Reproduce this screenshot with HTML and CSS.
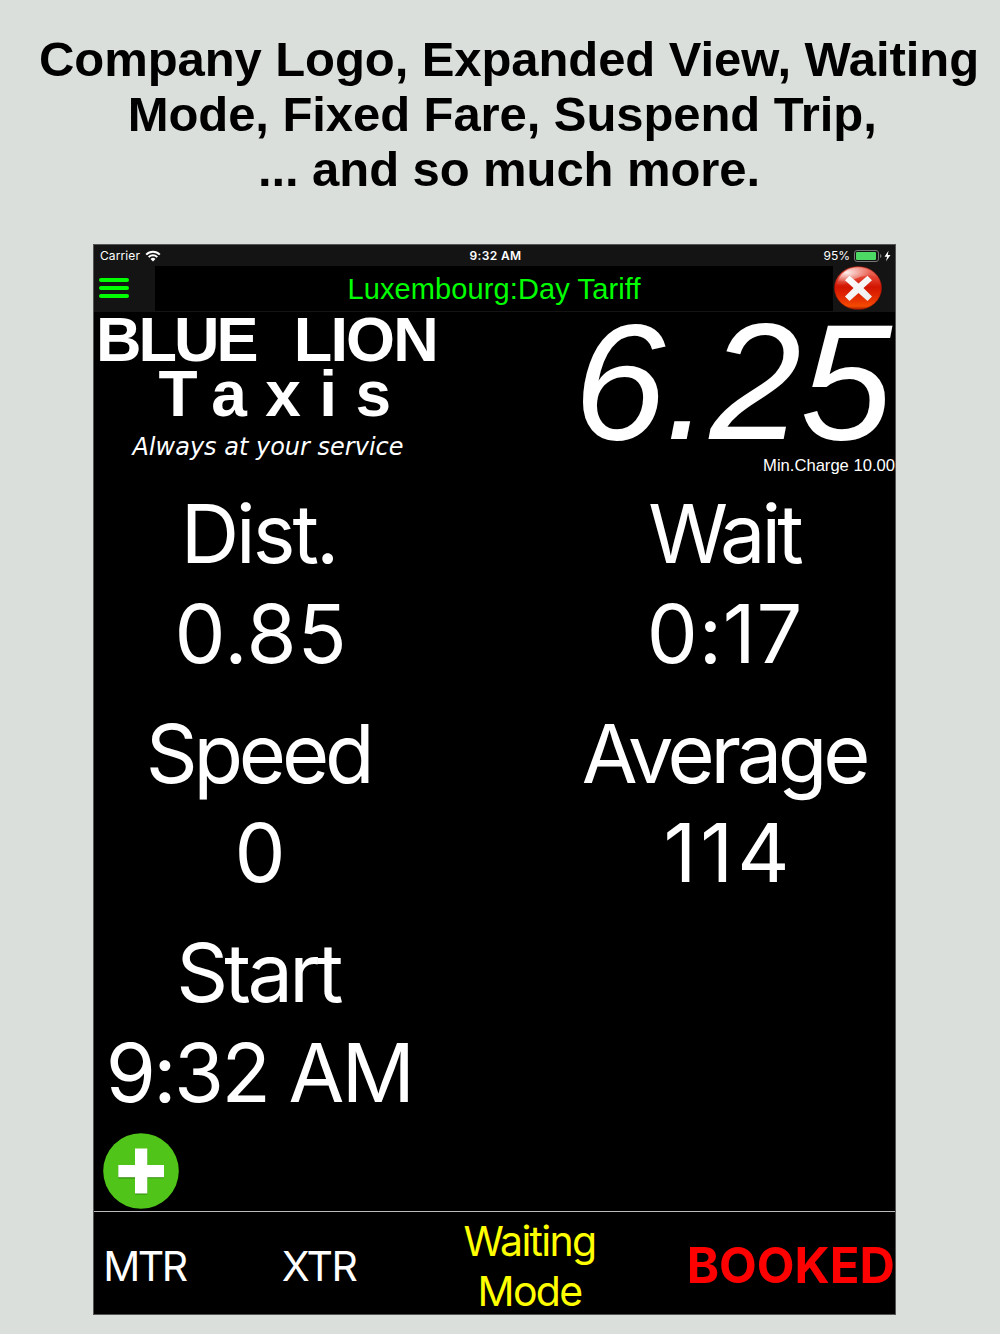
FILE: index.html
```
<!DOCTYPE html>
<html lang="en">
<head>
  <meta charset="UTF-8" />
  <meta name="viewport" content="width=device-width, initial-scale=1.0" />
  <title>Taxi Meter</title>
  <link rel="stylesheet" href="styles.css">
</head>
<body>
  <h1>Company Logo, Expanded View, Waiting<br>Mode, Fixed Fare, Suspend Trip,&nbsp;<br>... and so much more.</h1>

  <div class="app">
    <div class="status">
      <div class="carrier">
        <span>Carrier</span>
        <svg width="16" height="12" viewBox="0 0 16 12">
          <path d="M1.2 4.6a9.6 9.6 0 0 1 13.6 0M3.7 7.1a6.1 6.1 0 0 1 8.6 0" fill="none" stroke="#fff" stroke-width="2"/>
          <path d="M5.5 9a3.6 3.6 0 0 1 5 0L8 11.6z" fill="#fff"/>
        </svg>
      </div>
      <div class="clock">9:32 AM</div>
      <div class="battery">
        <span>95%</span>
        <svg width="37" height="12" viewBox="0 0 37 12">
          <rect x="0.5" y="0.5" width="24" height="11" rx="2.5" fill="none" stroke="#777"/>
          <rect x="2" y="2" width="20" height="8" rx="1" fill="#4cd964"/>
          <path d="M26 4v4q1.5-.5 1.5-2T26 4" fill="#777"/>
          <path d="M34.5.8 30.5 6.7h2.6L32 11.2l4.5-6.2h-2.7z" fill="#fff"/>
        </svg>
      </div>
    </div>

    <div class="nav">
      <div class="menu">
        <i></i><i></i><i></i>
      </div>
      <div class="tariff">Luxembourg:Day Tariff</div>
      <div class="close">
        <svg width="48" height="44" viewBox="0 0 48 44">
          <defs>
            <linearGradient id="ball" x1="0" y1="0" x2="0" y2="1">
              <stop offset="0" stop-color="#ee6a5c"/>
              <stop offset=".3" stop-color="#e03a28"/>
              <stop offset=".48" stop-color="#d21400"/>
              <stop offset=".75" stop-color="#e63000"/>
              <stop offset=".92" stop-color="#f44a00"/>
              <stop offset="1" stop-color="#a01c00"/>
            </linearGradient>
            <radialGradient id="shine" cx=".25" cy=".3" r=".6">
              <stop offset="0" stop-color="#fff" stop-opacity=".9"/>
              <stop offset="1" stop-color="#fff" stop-opacity=".08"/>
            </radialGradient>
            <linearGradient id="cross" x1="0" y1="0" x2="1" y2="1">
              <stop offset="0" stop-color="#fff"/>
              <stop offset="1" stop-color="#ececec"/>
            </linearGradient>
          </defs>
          <ellipse cx="24" cy="22" rx="23.6" ry="21.6" fill="url(#ball)" stroke="#8c1408" stroke-width=".5"/>
          <path d="M3 18C5 7 14 1.5 24 1.5c9 0 15 3.5 18.5 9C34 8 24 11 18 15 13 18 8 19 3 18z" fill="url(#shine)"/>
          <path d="M15.500 9.800 24.500 17.500 33.500 9.800 38 14.300 29.500 22 38 30.500 33.500 35 24.500 27 15.500 35 11 30.500 19.500 22 11 14.300z" fill="url(#cross)"/>
        </svg>
      </div>
    </div>

    <div class="top">
      <div class="logo">
        <div class="name"><span class="blue">BLUE</span><span class="lion">LION</span></div>
        <div class="taxis">Taxis</div>
        <div class="slogan">Always at your service</div>
      </div>
      <div class="fare">
        <div class="amount">6.25</div>
        <div class="min">Min.Charge 10.00</div>
      </div>
    </div>

    <div class="grid">
      <div class="cell">
        <div class="dist">Dist.</div>
        <div class="num">0.85</div>
      </div>
      <div class="cell">
        <div class="wait">Wait</div>
        <div class="num">0:17</div>
      </div>
      <div class="cell">
        <div class="speed">Speed</div>
        <div class="zero">0</div>
      </div>
      <div class="cell">
        <div class="avg">Average</div>
        <div class="avg-num">114</div>
      </div>
      <div class="cell">
        <div class="start">Start</div>
        <div class="start-time">9:32 AM</div>
      </div>
    </div>

    <div class="add">
      <svg width="76" height="76" viewBox="0 0 76 76">
        <circle cx="38" cy="38" r="37.8" fill="#50c418"/>
        <path d="M32 16.5h12.3v16H61v12.7H44.3v16.3H32v-16H15.3V32.5H32z" fill="#2f8a0a"/>
        <path d="M32 15.6h12.3v16.3H61v12.4H44.3v16.3H32V44.3H15.3V31.9H32z" fill="#fff"/>
      </svg>
    </div>

    <div class="footer">
      <div class="mtr">MTR</div>
      <div class="xtr">XTR</div>
      <div class="mode">Waiting<br>Mode</div>
      <div class="booked">BOOKED</div>
    </div>
  </div>
</body>
</html>
```
FILE: styles.css
```
* {
  box-sizing: border-box;
}

body {
  margin: 0;
  background: #dbdfdb;
  font-family: Inter, sans-serif;
  color: #fff;
}

svg {
  display: block;
}

h1 {
  margin: 0;
  padding: 32px 0 47px 18px;
  font: bold 49px/55px "Liberation Sans", sans-serif;
  letter-spacing: -0.08px;
  text-align: center;
  white-space: nowrap;
  color: #000;
}

.app {
  width: 803px;
  height: 1071px;
  margin-left: 93px;
  border: 1px solid #555;
  background: #000;
}

.status {
  height: 21px;
  background: #141414;
  display: grid;
  grid-template-columns: 1fr 1fr 1fr;
  align-items: center;
  font-size: 12px;
  padding: 0 4px 0 6px;
}

.carrier {
  display: flex;
  align-items: center;
  gap: 5px;
  letter-spacing: 0.1px;
}

.clock {
  font-weight: 600;
  letter-spacing: 0.35px;
  text-align: center;
}

.battery {
  display: flex;
  align-items: center;
  justify-content: flex-end;
  gap: 4px;
}

.nav {
  height: 46px;
  display: flex;
  border-bottom: 1px solid #141414;
}

.menu {
  width: 61px;
  background: #141414;
  display: flex;
  flex-direction: column;
  justify-content: center;
  gap: 4px;
  padding: 0 0 2px 5px;
}

.menu i {
  width: 30px;
  height: 4px;
  border-radius: 2px;
  background: #0f0;
}

.tariff {
  flex: 1;
  font: 29px/46px "Liberation Sans", sans-serif;
  letter-spacing: 0.12px;
  text-align: center;
  color: #0f0;
}

.close {
  width: 62px;
  background: #141414;
  padding: 0 0 0 1px;
}

.top {
  height: 171px;
  display: flex;
  justify-content: space-between;
}

.logo {
  width: 346px;
  text-align: center;
}

.name {
  display: flex;
  justify-content: space-between;
  padding: 0 3px 0 2px;
  font: bold 63px/55px "Liberation Sans", sans-serif;
}

.blue {
  letter-spacing: -3px;
}

.lion {
  letter-spacing: -1.8px;
}

.taxis {
  font: bold 64px/55px "Liberation Sans", sans-serif;
  letter-spacing: 18.4px;
  padding-left: 34px;
}

.slogan {
  font: italic 24px/50px "DejaVu Sans", sans-serif;
  padding-left: 2px;
  white-space: nowrap;
}

.fare {
  text-align: right;
  font-family: "Liberation Sans", sans-serif;
}

.amount {
  padding-right: 4px;
  font-size: 165px;
  font-style: italic;
  line-height: 140px;
  letter-spacing: -1px;
}

.min {
  font-size: 16.6px;
  line-height: 28px;
}

.grid {
  padding: 2px 3px 0 0;
  display: grid;
  grid-template-columns: 334px 334px;
  justify-content: space-between;
  row-gap: 20.5px;
  font-size: 81px;
  line-height: 99.5px;
  text-align: center;
  white-space: nowrap;
}

.num {
  letter-spacing: 0.8px;
}

.dist {
  padding-right: 5px;
  letter-spacing: -3px;
}

.wait {
  padding-right: 2px;
  letter-spacing: -4px;
}

.speed {
  padding-right: 6px;
  letter-spacing: -4.2px;
}

.zero {
  padding-right: 2px;
}

.avg {
  padding-right: 2px;
  letter-spacing: -4.3px;
}

.avg-num {
  padding-left: 7px;
  letter-spacing: 4px;
}

.start {
  padding-right: 6px;
  letter-spacing: -3.8px;
}

.start-time {
  padding-right: 4px;
  letter-spacing: -2.6px;
}

.add {
  padding: 10px 0 0 9px;
}

.footer {
  height: 103px;
  margin-top: 2px;
  padding-top: 4px;
  border-top: 1px solid #bbb;
  display: grid;
  grid-template-columns: 101px 248px 173px 1fr;
  align-items: center;
  text-align: center;
  font-size: 41px;
  line-height: 50px;
  white-space: nowrap;
}

.mtr {
  letter-spacing: -2.4px;
}

.xtr {
  letter-spacing: -1.6px;
}

.mode {
  letter-spacing: -1.7px;
  color: #ff0;
}

.booked {
  font-size: 49px;
  font-weight: bold;
  text-align: right;
  color: #f00;
}
```
